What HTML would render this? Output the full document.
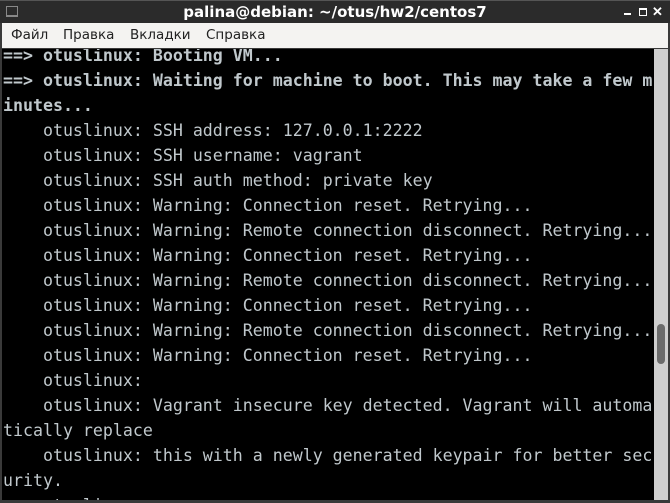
<!DOCTYPE html>
<html><head><meta charset="utf-8"><style>
html,body{margin:0;padding:0;width:670px;height:503px;overflow:hidden;background:#3a3a3a;}
.title{position:absolute;left:0;top:0;width:670px;height:23px;background:#2b2b2b;color:#fff;font:bold 15px "DejaVu Sans","Liberation Sans",sans-serif;text-align:center;line-height:22px;border-top:1px solid #555;box-sizing:border-box}
.menu{position:absolute;left:2px;top:23px;width:666px;height:25px;background:#f4f3f1;font:13.5px "DejaVu Sans","Liberation Sans",sans-serif;color:#222;}
.menu span{position:absolute;top:4px}
.term{position:absolute;left:2px;top:49px;width:652px;height:451px;background:#000;overflow:hidden}
.sb{position:absolute;left:654px;top:49px;width:14px;height:451px;background:#cfcfcf}
.thumb{position:absolute;left:3px;top:275px;width:8px;height:40px;background:#6b6b6b;border-radius:4px}
pre{margin:0;position:absolute;left:1px;top:-6.5px;font:16.6px "DejaVu Sans Mono","Liberation Mono",monospace;line-height:25px;color:#c0c8cc;white-space:pre}
b{font-weight:bold}
.ic{position:absolute;top:8px;color:#fff;font:bold 13px sans-serif}
</style></head><body>
<div class="title">palina@debian: ~/otus/hw2/centos7</div>
<div style="position:absolute;left:6px;top:6px;width:10px;height:8px;border:1px solid #888;border-bottom:2px solid #888"></div>
<div style="position:absolute;left:624px;top:13px;width:7px;height:2px;background:#fff"></div>
<div style="position:absolute;left:639px;top:8px;width:6px;height:5px;border:1px solid #fff;border-top-width:2px"></div>
<div class="ic" style="left:652px;top:4px">✕</div>
<div class="menu"><span style="left:9px">Файл</span><span style="left:61px">Правка</span><span style="left:128px">Вкладки</span><span style="left:204px">Справка</span></div>
<div class="term"><pre><b>==&gt; otuslinux: Booting VM...
==&gt; otuslinux: Waiting for machine to boot. This may take a few m
inutes...</b>
    otuslinux: SSH address: 127.0.0.1:2222
    otuslinux: SSH username: vagrant
    otuslinux: SSH auth method: private key
    otuslinux: Warning: Connection reset. Retrying...
    otuslinux: Warning: Remote connection disconnect. Retrying...
    otuslinux: Warning: Connection reset. Retrying...
    otuslinux: Warning: Remote connection disconnect. Retrying...
    otuslinux: Warning: Connection reset. Retrying...
    otuslinux: Warning: Remote connection disconnect. Retrying...
    otuslinux: Warning: Connection reset. Retrying...
    otuslinux:
    otuslinux: Vagrant insecure key detected. Vagrant will automa
tically replace
    otuslinux: this with a newly generated keypair for better sec
urity.
    otuslinux:</pre></div>
<div class="sb"><div class="thumb"></div></div>
</body></html>
